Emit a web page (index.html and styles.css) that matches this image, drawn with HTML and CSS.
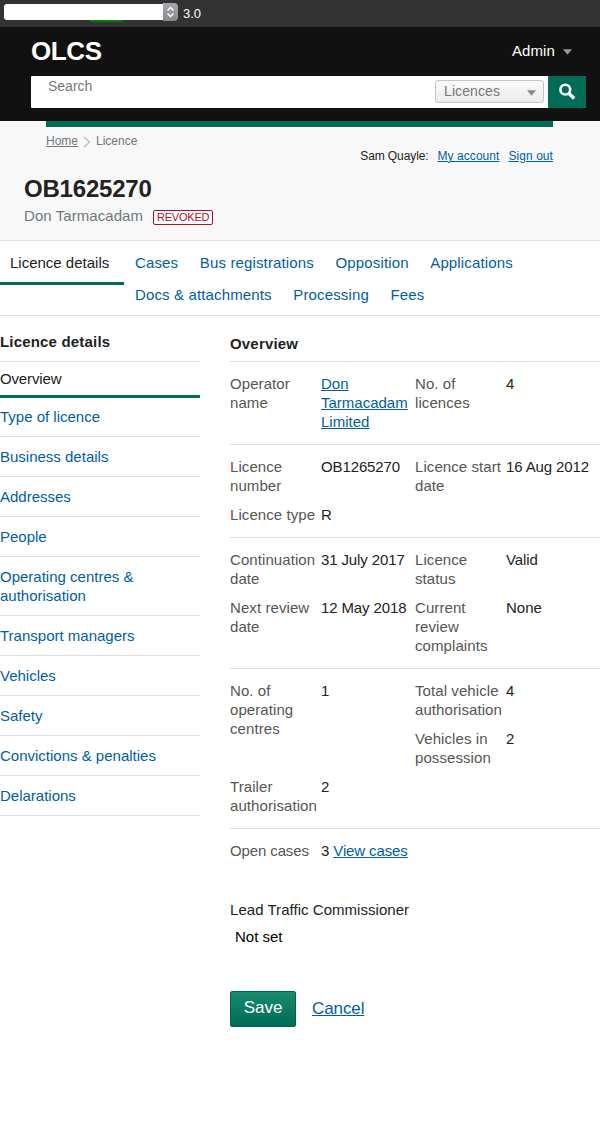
FILE: index.html
```html
<!DOCTYPE html>
<html lang="en">
<head>
<meta charset="utf-8">
<title>OLCS - Licence details</title>
<link rel="stylesheet" href="styles.css">
</head>
<body>
<div class="toolbar">
  <div class="picker"><span class="picker-mark"></span><span class="picker-field"></span><span class="picker-arrows"><svg width="15" height="18" viewBox="0 0 15 18"><path d="M4.5 7.5 7.5 4.5l3 3M4.5 10.5l3 3 3-3" fill="none" stroke="#fff" stroke-width="1.4"/></svg></span></div>
  <span class="version">3.0</span>
</div>
<header class="header">
  <div class="header-top">
    <span class="logo">OLCS</span>
    <span class="admin">Admin <svg class="caret" width="9" height="6" viewBox="0 0 9 6"><path d="M0 .2h9L4.5 5.8z" fill="#999"/></svg></span>
  </div>
  <div class="search">
    <span class="search-text">Search</span>
    <span class="select">Licences <svg class="caret" width="9" height="6" viewBox="0 0 9 6"><path d="M0 .2h9L4.5 5.8z" fill="#888"/></svg></span>
    <span class="search-button"><svg width="38" height="32" viewBox="0 0 38 32"><circle cx="17.3" cy="13.6" r="4.9" fill="none" stroke="#fff" stroke-width="2.6"/><path d="m20.8 17.2 5.4 5.3" stroke="#fff" stroke-width="3.3"/></svg></span>
  </div>
</header>
<section class="banner">
  <div class="banner-top">
    <div class="crumbs"><a href="#">Home</a><svg width="8" height="12" viewBox="0 0 8 12"><path d="m1 .8 5.4 5.2L1 11.2" fill="none" stroke="#bfc1c3" stroke-width="1.4"/></svg><span>Licence</span></div>
    <div class="account"><span class="user">Sam Quayle:</span><a href="#">My account</a><a href="#">Sign out</a></div>
  </div>
  <h1>OB1625270</h1>
  <div class="subtitle"><span>Don Tarmacadam</span><span class="badge">REVOKED</span></div>
</section>
<nav class="tabs">
  <span class="tab-active">Licence details</span>
  <div class="tab-links">
    <div class="tab-row"><a href="#">Cases</a><a href="#">Bus registrations</a><a href="#">Opposition</a><a href="#">Applications</a></div>
    <div class="tab-row"><a href="#">Docs &amp; attachments</a><a href="#">Processing</a><a href="#">Fees</a></div>
  </div>
</nav>
<div class="columns">
  <aside class="sidebar">
    <h2>Licence details</h2>
    <ul>
      <li class="current">Overview</li>
      <li><a href="#">Type of licence</a></li>
      <li><a href="#">Business details</a></li>
      <li><a href="#">Addresses</a></li>
      <li><a href="#">People</a></li>
      <li><a href="#">Operating centres &amp; authorisation</a></li>
      <li><a href="#">Transport managers</a></li>
      <li><a href="#">Vehicles</a></li>
      <li><a href="#">Safety</a></li>
      <li><a href="#">Convictions &amp; penalties</a></li>
      <li><a href="#">Delarations</a></li>
    </ul>
  </aside>
  <main class="main">
    <h2>Overview</h2>
    <div class="group">
      <dl><dt>Operator name</dt><dd><a href="#">Don Tarmacadam Limited</a></dd></dl>
      <dl><dt>No. of licences</dt><dd>4</dd></dl>
    </div>
    <div class="group">
      <dl><dt>Licence number</dt><dd class="figure">OB1265270</dd></dl>
      <dl><dt>Licence start date</dt><dd class="figure">16 Aug 2012</dd></dl>
      <dl><dt>Licence type</dt><dd>R</dd></dl>
    </div>
    <div class="group">
      <dl><dt>Continuation date</dt><dd class="figure">31 July 2017</dd></dl>
      <dl><dt>Licence status</dt><dd class="figure">Valid</dd></dl>
      <dl><dt>Next review date</dt><dd class="figure">12 May 2018</dd></dl>
      <dl><dt>Current review complaints</dt><dd>None</dd></dl>
    </div>
    <div class="group">
      <dl class="tall"><dt>No. of operating centres</dt><dd>1</dd></dl>
      <dl><dt>Total vehicle authorisation</dt><dd>4</dd></dl>
      <dl><dt>Vehicles in possession</dt><dd>2</dd></dl>
      <dl><dt>Trailer authorisation</dt><dd>2</dd></dl>
    </div>
    <div class="group">
      <dl><dt class="figure">Open cases</dt><dd class="figure">3 <a href="#">View cases</a></dd></dl>
    </div>
    <div class="commissioner">Lead Traffic Commissioner</div>
    <div class="commissioner-value">Not set</div>
    <div class="actions"><button class="save">Save</button><a href="#">Cancel</a></div>
  </main>
</div>
</body>
</html>
```
FILE: styles.css
```css
* { box-sizing: border-box; }
body { margin: 0; min-height: 1131px; background: #fff; color: #222; font: 15px/19px "Liberation Sans", Arial, sans-serif; }
h1, h2, ul, dl, dt, dd { margin: 0; padding: 0; }
a { color: #005ea5; text-underline-offset: 1px; text-decoration-thickness: 1px; }
svg { display: block; }

.toolbar { height: 27px; background: #333; padding: 3px 0 0 4px; display: flex; }
.picker { position: relative; display: flex; width: 174px; height: 18px; }
.picker-mark { position: absolute; left: 86px; top: 16px; width: 33px; height: 3px; border-radius: 2px; background: #008000; }
.picker-field { position: relative; width: 159px; height: 16px; margin-top: 1px; background: #fff; border-radius: 3px 0 0 3px; }
.picker-arrows { width: 15px; height: 18px; background: linear-gradient(#aaaaae, #87878c); border-radius: 0 4px 4px 0; }
.version { color: #fff; font-size: 13px; line-height: 21px; margin-left: 5px; }

.header { height: 94px; background: #111; padding: 0 14px 0 31px; }
.header-top { height: 49px; display: flex; justify-content: space-between; }
.logo { color: #fff; font-weight: bold; font-size: 26px; line-height: 30px; margin-top: 9px; letter-spacing: -.4px; }
.admin { display: flex; gap: 8px; color: #fff; margin: 14px 14px 0 0; letter-spacing: .1px; }
.admin .caret { margin-top: 8px; }
.search { display: flex; height: 32px; background: #fff; border-radius: 1px 3px 3px 1px; }
.search-text { flex: 1; color: #777; font-size: 14px; padding: 1px 0 0 17px; }
.select { width: 109px; height: 23px; margin: 4px 4px 0 0; padding: 0 7px 0 8px; display: flex; justify-content: space-between; border: 1px solid #c5c5c5; border-radius: 3px; background: linear-gradient(#fafafa, #ebebeb); color: #777; font-size: 14px; line-height: 21px; letter-spacing: .1px; }
.select .caret { margin-top: 9px; }
.search-button { width: 38px; background: #006c56; border-radius: 0 3px 3px 0; }

.banner { height: 120px; background: #f8f8f8; border-bottom: 1px solid #dcdcdc; padding-left: 24px; }
.banner-top { display: flex; justify-content: space-between; margin: 0 47px 0 22px; border-top: 6px solid #006c56; font-size: 12px; height: 53px; }
.crumbs { display: flex; margin-top: 5px; color: #6f777b; }
.crumbs a { color: #6f777b; }
.crumbs svg { margin: 4px 5px 0; }
.account { display: flex; gap: 9px; margin-top: 20px; }
.account a { letter-spacing: .06px; }
.user { letter-spacing: -.1px; }
h1 { font-size: 24px; line-height: 30px; letter-spacing: -.2px; }
.subtitle { display: flex; color: #6f777b; margin-top: 2px; letter-spacing: .07px; }
.badge { margin: 4px 0 0 10px; width: 60px; height: 15px; border: 1px solid #b10e1e; border-radius: 2px; color: #b10e1e; background: #fff; font-size: 11px; line-height: 13px; text-align: center; white-space: nowrap; letter-spacing: -.2px; }

.tabs { display: flex; height: 75px; border-bottom: 1px solid #dcdcdc; }
.tab-active { width: 124px; height: 44px; border-bottom: 3px solid #006c56; padding: 12px 0 0 10px; }
.tab-links { padding: 12px 0 0 11px; letter-spacing: .14px; }
.tab-row { display: flex; gap: 21.6px; height: 32px; }
.tab-row a, .sidebar a { text-decoration: none; }

.columns { display: grid; grid-template-columns: 200px 370px; gap: 30px; }
h2 { font-size: 15px; line-height: 19px; letter-spacing: .18px; }
.sidebar h2 { padding: 16px 0 10px; border-bottom: 1px solid #dcdcdc; }
.sidebar ul { list-style: none; }
.sidebar li { padding: 10px 0; border-bottom: 1px solid #dcdcdc; }
.sidebar .current { padding: 7px 0; border-bottom: 3px solid #006c56; letter-spacing: -.15px; }
.sidebar .current + li { padding-top: 9px; }

.main h2 { padding: 18px 0 8px; }
.group { display: grid; grid-template-columns: 185px 185px; row-gap: 10px; border-top: 1px solid #dcdcdc; padding: 12px 0 13px; }
.group dl { display: grid; grid-template-columns: 91px 94px; }
.group .tall { grid-row: span 2; }
dt { color: #555; letter-spacing: .08px; }
.group .figure { letter-spacing: -.12px; }
.commissioner { margin-top: 27px; letter-spacing: .04px; }
.commissioner-value { margin-top: 8px; padding-left: 5px; color: #000; }
.actions { display: flex; gap: 16px; margin-top: 45px; font-size: 17px; line-height: 35px; letter-spacing: -.1px; }
.save { width: 66px; height: 36px; padding: 0 0 3px; border: 1px solid #00634e; border-radius: 2px; background: linear-gradient(#178c6e, #006c56); color: #fff; font: 17px "Liberation Sans", Arial, sans-serif; }
```
